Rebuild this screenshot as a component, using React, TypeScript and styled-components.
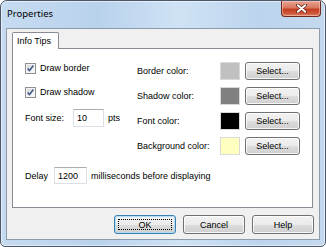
import React from 'react';
import styled, { createGlobalStyle } from 'styled-components';

const GlobalStyle = createGlobalStyle`
  html, body {
    margin: 0;
    padding: 0;
    background: #ffffff;
  }
  body {
    font-family: "Liberation Sans", Arial, sans-serif;
    font-size: 9px;
    color: #000;
  }
  * {
    box-sizing: border-box;
  }
`;

const Window = styled.div`
  width: 326px;
  height: 247px;
  border: 1px solid #4c5868;
  border-radius: 7px 7px 5px 5px;
  background: linear-gradient(
    to right,
    #c6dbf1 0%,
    #b9d2ec 30%,
    #cfe2f5 55%,
    #bcd4ed 80%,
    #c4d9ef 100%
  );
  box-shadow: inset 0 0 0 1px rgba(255, 255, 255, 0.55);
  display: flex;
  flex-direction: column;
  overflow: hidden;
`;

const TitleBar = styled.div`
  height: 27px;
  display: flex;
  align-items: flex-start;
  flex-shrink: 0;
`;

const Title = styled.div`
  padding-left: 6px;
  line-height: 25px;
  font-family: "Noto Sans", "Liberation Sans", sans-serif;
  font-size: 9.5px;
  color: #000;
`;

const CloseButton = styled.div`
  margin-left: auto;
  margin-right: 4px;
  width: 40px;
  height: 16px;
  border: 1px solid #6e2a20;
  border-top: none;
  border-radius: 0 0 4px 4px;
  background: linear-gradient(
    to bottom,
    #e9a594 0%,
    #d9775f 45%,
    #c33d22 55%,
    #cf5a3c 85%,
    #e08a6a 100%
  );
  box-shadow: inset 0 0 0 1px rgba(255, 220, 210, 0.45);
  display: flex;
  align-items: center;
  justify-content: center;
`;

const Client = styled.div`
  flex: 1;
  margin: 0 5px 6px 5px;
  border: 1px solid #8d9cad;
  background: #f0f0f0;
  display: flex;
  flex-direction: column;
`;

const TabArea = styled.div`
  padding: 3px 6px 0 5px;
  display: flex;
  flex-direction: column;
`;

const TabStrip = styled.div`
  display: flex;
  height: 16px;
`;

const Tab = styled.div`
  width: 47px;
  height: 17px;
  padding-left: 4px;
  border: 1px solid #898c95;
  border-bottom: none;
  border-radius: 2px 2px 0 0;
  background: #ffffff;
  display: flex;
  align-items: center;
  position: relative;
  z-index: 1;
`;

const Panel = styled.div`
  height: 160px;
  border: 1px solid #898c95;
  background: #ffffff;
  padding-left: 12px;
  display: grid;
  grid-template-columns: 112px 1fr;
  align-content: start;
`;

const LeftCol = styled.div`
  padding-top: 10px;
  display: flex;
  flex-direction: column;
`;

const RightCol = styled.div`
  padding-top: 13px;
  display: flex;
  flex-direction: column;
  gap: 7px;
`;

const Row = styled.div<{ $top?: number; $h?: number }>`
  display: flex;
  align-items: center;
  height: ${(p) => p.$h ?? 18}px;
  margin-top: ${(p) => p.$top ?? 0}px;
  white-space: nowrap;
`;

const DelayRow = styled(Row)`
  grid-column: 1 / span 2;
`;

const CheckBox = styled.span`
  width: 11px;
  height: 11px;
  margin-right: 4px;
  display: inline-flex;
`;

const Label = styled.span<{ $w?: number }>`
  display: inline-block;
  width: ${(p) => (p.$w ? `${p.$w}px` : 'auto')};
`;

const TextBox = styled.div<{ $w: number; $h: number }>`
  width: ${(p) => p.$w}px;
  height: ${(p) => p.$h}px;
  border: 1px solid #dbdfe6;
  border-top-color: #abadb3;
  background: #ffffff;
  padding-left: 3px;
  display: flex;
  align-items: center;
`;

const Swatch = styled.div<{ $color: string }>`
  width: 20px;
  height: 18px;
  border: 1px solid #d9d9d9;
  background: ${(p) => p.$color};
  margin-right: 5px;
`;

const Button = styled.div<{ $w: number; $h: number; $default?: boolean }>`
  width: ${(p) => p.$w}px;
  height: ${(p) => p.$h}px;
  border: 1px solid ${(p) => (p.$default ? '#3c7fb1' : '#707070')};
  border-radius: 3px;
  background: linear-gradient(
    to bottom,
    #f2f2f2 0%,
    #ebebeb 50%,
    #dddddd 51%,
    #cfcfcf 100%
  );
  box-shadow: inset 0 0 0 1px
    ${(p) => (p.$default ? 'rgba(170, 220, 250, 0.9)' : 'rgba(255, 255, 255, 0.8)')};
  display: flex;
  align-items: center;
  justify-content: center;
  position: relative;
  color: #000;
`;

const FocusRing = styled.span`
  position: absolute;
  inset: 3px;
  border: 1px dotted #000;
`;

const ButtonBar = styled.div`
  margin-top: 7px;
  padding-right: 5px;
  display: flex;
  justify-content: flex-end;
  gap: 7px;
`;

const Gap = styled.span<{ $w: number }>`
  display: inline-block;
  width: ${(p) => p.$w}px;
`;

const Check = () => (
  <CheckBox>
    <svg width="11" height="11" viewBox="0 0 11 11">
      <defs>
        <linearGradient id="cbg" x1="0" y1="0" x2="1" y2="1">
          <stop offset="0" stopColor="#d6d8db" />
          <stop offset="1" stopColor="#fbfbfb" />
        </linearGradient>
      </defs>
      <rect x="0.5" y="0.5" width="10" height="10" fill="#f6f6f6" stroke="#8e8f8f" />
      <rect x="2" y="2" width="7" height="7" fill="url(#cbg)" />
      <path d="M2.6 5.4 L4.5 7.6 L8.4 2.6" fill="none" stroke="#445a88" strokeWidth="1.6" />
    </svg>
  </CheckBox>
);

const colorRows = [
  { label: 'Border color:', color: '#c0c0c0' },
  { label: 'Shadow color:', color: '#808080' },
  { label: 'Font color:', color: '#000000' },
  { label: 'Background color:', color: '#ffffc0' },
];

const App: React.FC = () => {
  return (
    <>
      <GlobalStyle />
      <Window>
        <TitleBar>
          <Title>Properties</Title>
          <CloseButton>
            <svg width="11" height="9" viewBox="0 0 11 9">
              <path d="M1.5 1 L9.5 8 M9.5 1 L1.5 8" stroke="#6a2418" strokeWidth="3.4" strokeLinecap="round" />
              <path d="M1.8 1.2 L9.2 7.8 M9.2 1.2 L1.8 7.8" stroke="#ffffff" strokeWidth="1.9" strokeLinecap="round" />
            </svg>
          </CloseButton>
        </TitleBar>
        <Client>
          <TabArea>
            <TabStrip>
              <Tab>Info Tips</Tab>
            </TabStrip>
            <Panel>
              <LeftCol>
                <Row>
                  <Check />
                  Draw border
                </Row>
                <Row $top={6}>
                  <Check />
                  Draw shadow
                </Row>
                <Row $top={8}>
                  <Label $w={48}>Font size:</Label>
                  <TextBox $w={31} $h={18}>10</TextBox>
                  <Gap $w={4} />
                  pts
                </Row>
              </LeftCol>
              <RightCol>
                {colorRows.map((r) => (
                  <Row key={r.label}>
                    <Label $w={83}>{r.label}</Label>
                    <Swatch $color={r.color} />
                    <Button $w={55} $h={18}>Select...</Button>
                  </Row>
                ))}
              </RightCol>
              <DelayRow $top={12} $h={17}>
                <Label $w={29}>Delay</Label>
                <TextBox $w={33} $h={17}>1200</TextBox>
                <Gap $w={4} />
                milliseconds before displaying
              </DelayRow>
            </Panel>
          </TabArea>
          <ButtonBar>
            <Button $w={62} $h={19} $default>
              <FocusRing />
              OK
            </Button>
            <Button $w={62} $h={19}>Cancel</Button>
            <Button $w={62} $h={19}>Help</Button>
          </ButtonBar>
        </Client>
      </Window>
    </>
  );
};

export default App;
